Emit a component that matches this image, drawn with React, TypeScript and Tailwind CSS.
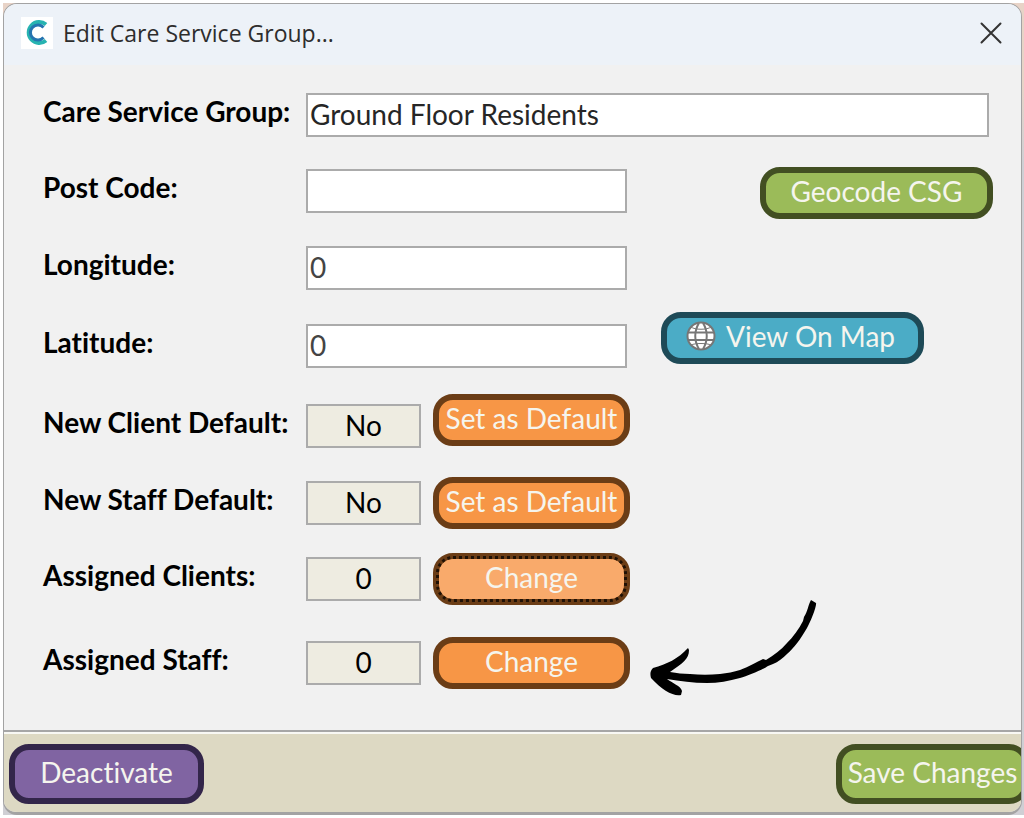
import type { ReactNode } from "react";

const TONES = {
  green: "border-[#424f22] bg-[#9bbb59]",
  blue: "border-[#1e4a57] bg-[#4bacc6]",
  orange: "border-[#6b3d16] bg-[#f79646]",
  focused: "border-[#6b3d16] bg-[#f9aa6b]",
  purple: "border-[#33264a] bg-[#8064a2]",
};

type ActionProps = {
  tone: keyof typeof TONES;
  className: string;
  children: ReactNode;
};

function Action({ tone, className, children }: ActionProps) {
  return (
    <button
      type="button"
      className={`relative flex shrink-0 items-center justify-center whitespace-nowrap rounded-[20px] border-6 pb-1 text-[28px] leading-8 text-[#f5f5ee] ${TONES[tone]} ${className}`}
    >
      {children}
      {tone === "focused" && (
        <span className="absolute -inset-[3px] rounded-[17px] border-3 border-dotted border-[#1f1106]" />
      )}
    </button>
  );
}

type RowProps = {
  id: string;
  label: string;
  value: string;
  className?: string;
  inputClass: string;
  children?: ReactNode;
};

function Row({ id, label, value, className = "", inputClass, children }: RowProps) {
  return (
    <div className={`flex h-11 items-center ${className}`}>
      <label htmlFor={id} className="w-[263px] shrink-0 whitespace-nowrap pb-2 font-bold text-black">
        {label}
      </label>
      <input
        id={id}
        defaultValue={value}
        className={`h-11 min-w-0 border-2 border-[#ababab] pb-0.5 outline-none ${inputClass}`}
      />
      {children}
    </div>
  );
}

const WIDE = "flex-1 bg-white pl-0.5 text-[#262626]";
const FIELD = "w-[321px] bg-white pl-0.5 text-[#444]";
const STATUS = "w-[115px] bg-[#eeece1] text-center text-black";

function Logo() {
  return (
    <svg viewBox="0 0 32 32" className="size-8 bg-white" fill="none" aria-hidden="true">
      <path d="M25 7.5A10.5 10.5 0 1 0 25 23.5" stroke="#27b3b1" strokeWidth="4" />
      <path d="M22.5 10.5A7.5 7.5 0 1 0 22.5 20.5" stroke="#2474b0" strokeWidth="3" />
    </svg>
  );
}

function Globe() {
  return (
    <svg viewBox="0 0 30 30" className="size-[30px]" fill="#fff" stroke="#767676" strokeWidth="2" aria-hidden="true">
      <circle cx="15" cy="15" r="13.5" />
      <g fill="none">
        <path d="M13 2C8 10 8 20 13 28M17 2C22 10 22 20 17 28" />
        <path d="M2 11.5H28M2 19H28" />
        <path d="M5 6C9 9 21 9 25 6M5 24C9 22 21 22 25 24" strokeWidth="1" />
      </g>
    </svg>
  );
}

function Arrow() {
  return (
    <svg
      viewBox="0 0 170 98"
      className="pointer-events-none absolute -bottom-2 left-full ml-5 h-[98px] w-[170px]"
      aria-hidden="true"
    >
      <path d="M161 1L166 4C167 7 160 24 157 29C150 41 144 49 137 55C133 59 128 63 123 65L118 67C112 71 98 77 90 79C79 82 68 84 57 84C43 84 30 82 17 80C22 84 31 87 32 92L31 96C24 98 12 91 1 79C0 75 0 72 3 69C17 65 28 60 38 49L39 51C39 60 33 64 20 73C27 74 33 75 40 75C50 76 60 76 70 75C77 74 84 73 90 71C98 68 107 63 113 60L116 61C124 56 131 51 137 44C143 38 149 30 153 22L154 18C158 12 158 6 161 1Z" />
    </svg>
  );
}

export default function App() {
  return (
    <div className="min-h-[818px] bg-white pb-[3px] pl-[3px] pt-[3px]">
      <div className="bg-linear-to-b from-[#e8d3c7] from-10% to-[#cfcfd4] to-20% pr-0.5">
        <main className="flex min-h-[812px] flex-col overflow-hidden rounded-[14px] border border-b-3 border-[#a3a3a3] bg-[#f1f1f1] font-['Lato','Liberation_Sans',sans-serif] text-[28px] leading-8 [font-variant-ligatures:none]">
          <header className="flex h-[61px] items-center justify-between bg-[#edf2f8] pb-1 pl-[17px] pr-[19px]">
            <div className="flex items-center gap-2.5">
              <Logo />
              <h1 className="font-['Open_Sans','Noto_Sans',sans-serif] text-[23px] text-[#2d2d2d]">
                Edit Care Service Group...
              </h1>
            </div>
            <button type="button" aria-label="Close" className="text-[#333]">
              <svg viewBox="0 0 22 22" className="size-[22px]" stroke="currentColor" strokeWidth="2" strokeLinecap="round">
                <path d="M1.5 1.5L20.5 20.5M20.5 1.5L1.5 20.5" />
              </svg>
            </button>
          </header>

          <form className="flex-1 pb-11 pl-[39px] pr-7 pt-7">
            <Row id="group" label="Care Service Group:" value="Ground Floor Residents" className="pr-1" inputClass={WIDE} />
            <Row id="postcode" label="Post Code:" value="" className="mt-8" inputClass={FIELD}>
              <Action tone="green" className="ml-auto mt-1 h-[52px] w-[233px]">
                Geocode CSG
              </Action>
            </Row>
            <Row id="longitude" label="Longitude:" value="0" className="mt-[33px]" inputClass={FIELD} />
            <Row id="latitude" label="Latitude:" value="0" className="mt-[34px]" inputClass={FIELD}>
              <Action tone="blue" className="mb-4 ml-[34px] h-[52px] w-[263px] gap-2.5 pr-1">
                <Globe />
                View On Map
              </Action>
            </Row>
            <Row id="client-default" label="New Client Default:" value="No" className="mt-9" inputClass={STATUS}>
              <Action tone="orange" className="mb-3 ml-3 h-[52px] w-[197px]">
                Set as Default
              </Action>
            </Row>
            <Row id="staff-default" label="New Staff Default:" value="No" className="mt-[33px]" inputClass={STATUS}>
              <Action tone="orange" className="ml-3 h-[52px] w-[197px]">
                Set as Default
              </Action>
            </Row>
            <Row id="clients" label="Assigned Clients:" value="0" className="mt-8" inputClass={STATUS}>
              <Action tone="focused" className="ml-3 h-[52px] w-[197px]">
                Change
              </Action>
            </Row>
            <Row id="staff" label="Assigned Staff:" value="0" className="mt-10" inputClass={STATUS}>
              <div className="relative ml-3">
                <Action tone="orange" className="h-[52px] w-[197px]">
                  Change
                </Action>
                <Arrow />
              </div>
            </Row>
          </form>

          <footer className="flex items-center justify-between border-t-2 border-[#a6a6a6] bg-[#ddd9c3] pb-2 pl-[5px] pt-3 shadow-[inset_0_2px_0_#f8f8f4]">
            <Action tone="purple" className="h-[60px] w-[195px]">
              Deactivate
            </Action>
            <Action tone="green" className="-mr-2 h-[60px] w-[193px]">
              Save Changes
            </Action>
          </footer>
        </main>
      </div>
    </div>
  );
}
